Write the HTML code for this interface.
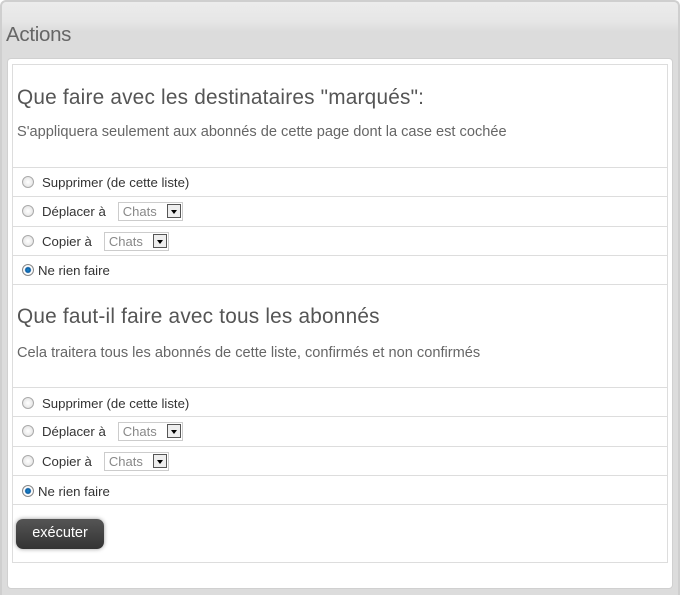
<!DOCTYPE html>
<html><head><meta charset="utf-8"><style>
*{margin:0;padding:0;box-sizing:border-box}
body{width:680px;height:595px;background:#fff;font-family:"Liberation Sans",sans-serif;color:#555;overflow:hidden;position:relative}
.outer{position:absolute;left:0;top:0;width:680px;height:595px;border:2px solid #cfcfcf;border-bottom:none;border-radius:6px 6px 0 0;background:linear-gradient(#ececec 0,#e6e6e6 20px,#dcdcdc 30px,#dcdcdc 100%)}
.title{position:absolute;left:6px;top:23px;font-size:20.5px;color:#666;letter-spacing:-0.3px}
.white{position:absolute;left:7px;top:58px;width:666px;height:531px;background:#fff;border-radius:4px;border:1px solid #d0d0d0}
.inner{position:absolute;left:12px;top:64px;width:656px;height:499px;border:1px solid #ddd}
.h{position:absolute;left:17px;font-size:20.8px;color:#555;letter-spacing:0.2px}
.d{position:absolute;left:17px;font-size:14.6px;color:#666}
.line{position:absolute;left:13px;width:654px;height:1px;background:#ddd}
.row{position:absolute;left:22px;font-size:13.2px;color:#333;display:flex;align-items:center;height:20px}
.r{width:12px;height:12px;border-radius:50%;border:1px solid #aaa;background:radial-gradient(#fff,#ddd);margin-right:8px}
.r.on{background:radial-gradient(#1a8ad0 0,#0b5aa0 2.5px,#fff 3.5px,#eee 100%);border-color:#888;margin-right:4px}
.sel{display:inline-flex;align-items:center;border:1px solid #ccc;height:19px;margin-left:12px;font-size:13px;color:#888;padding-left:4px}
.sel b{display:inline-block;width:14px;height:14px;border:1px solid #555;margin-left:10px;margin-right:1px;background:#eee;position:relative}
.sel b:after{content:"";position:absolute;left:3px;top:5px;border:3.5px solid transparent;border-top:4px solid #000}
.btn{position:absolute;left:16px;top:519px;width:88px;height:30px;border-radius:7px;background:linear-gradient(#555,#333);box-shadow:0 0 4px #999;color:#fff;font-size:14.5px;text-align:center;line-height:29px}
</style></head><body>
<div class="outer"></div>
<div class="title">Actions</div>
<div class="white"></div>
<div class="inner"></div>
<div class="h" style="top:86px">Que faire avec les destinataires "marqués":</div>
<div class="d" style="top:124px">S'appliquera seulement aux abonnés de cette page dont la case est cochée</div>
<div class="line" style="top:167px"></div>
<div class="row" style="top:172px"><span class="r"></span>Supprimer (de cette liste)</div>
<div class="line" style="top:196px"></div>
<div class="row" style="top:201px"><span class="r"></span>Déplacer à<span class="sel">Chats<b></b></span></div>
<div class="line" style="top:226px"></div>
<div class="row" style="top:231px"><span class="r"></span>Copier à<span class="sel">Chats<b></b></span></div>
<div class="line" style="top:255px"></div>
<div class="row" style="top:260px"><span class="r on"></span>Ne rien faire</div>
<div class="line" style="top:284px"></div>
<div class="h" style="top:305px">Que faut-il faire avec tous les abonnés</div>
<div class="d" style="top:345px">Cela traitera tous les abonnés de cette liste, confirmés et non confirmés</div>
<div class="line" style="top:387px"></div>
<div class="row" style="top:393px"><span class="r"></span>Supprimer (de cette liste)</div>
<div class="line" style="top:416px"></div>
<div class="row" style="top:421px"><span class="r"></span>Déplacer à<span class="sel">Chats<b></b></span></div>
<div class="line" style="top:446px"></div>
<div class="row" style="top:451px"><span class="r"></span>Copier à<span class="sel">Chats<b></b></span></div>
<div class="line" style="top:475px"></div>
<div class="row" style="top:481px"><span class="r on"></span>Ne rien faire</div>
<div class="line" style="top:504px"></div>
<div class="btn">exécuter</div>
</body></html>
